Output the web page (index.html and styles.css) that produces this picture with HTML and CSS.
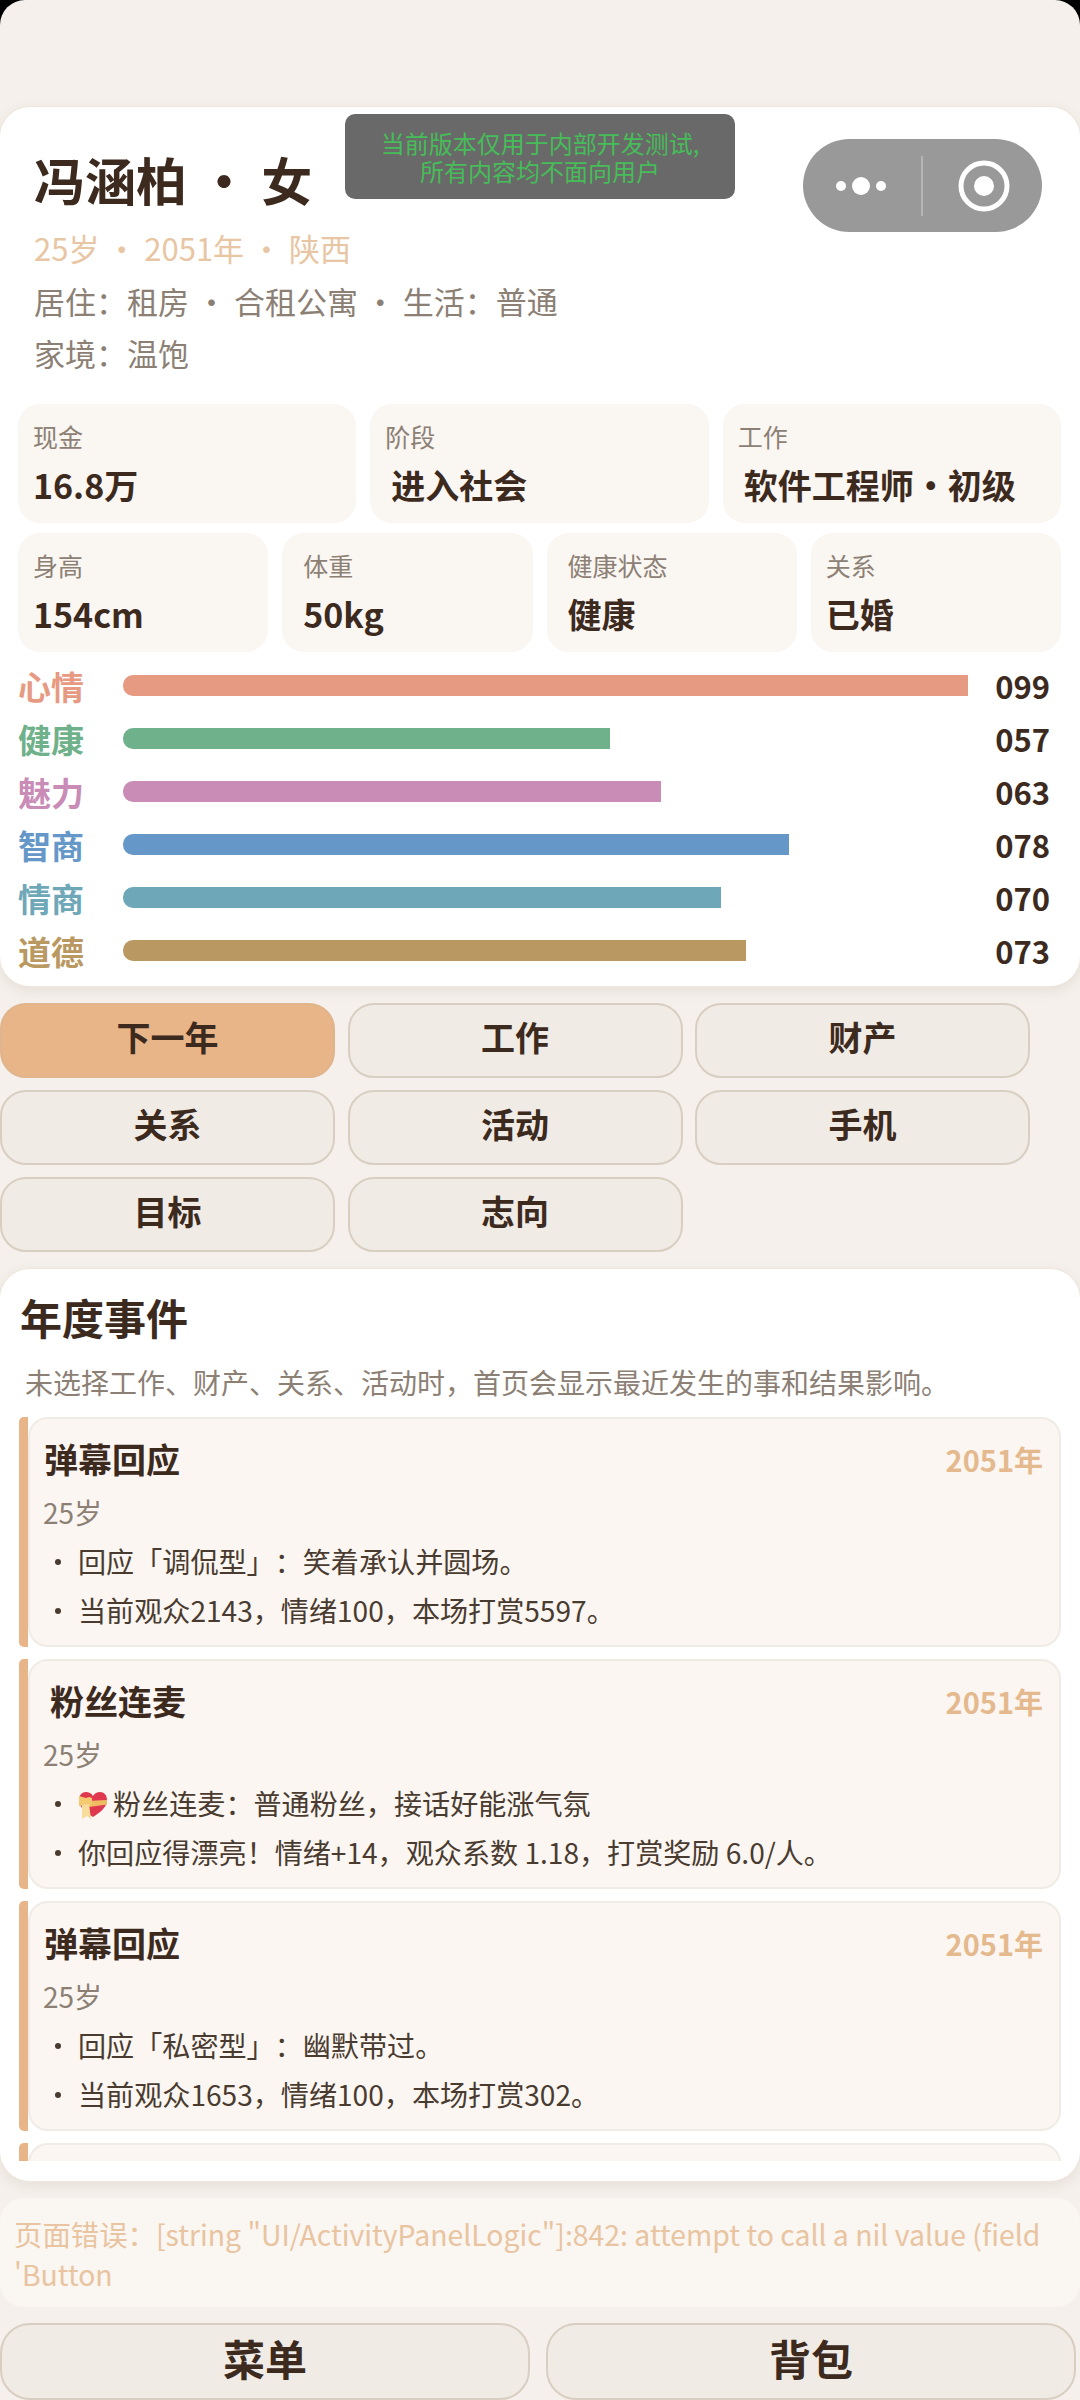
FILE: index.html
```html
<!DOCTYPE html>
<html lang="zh-CN">
<head>
    <meta charset="UTF-8">
    <meta name="viewport" content="width=device-width, initial-scale=1.0">
    <title>人生模拟</title>
    <link rel="stylesheet" href="styles.css">
</head>
<body>
    <div class="toast">当前版本仅用于内部开发测试,<br>所有内容均不面向用户</div>
    <div class="capsule">
        <svg class="capsule-icon" width="239" height="93" viewBox="0 0 239 93">
            <circle cx="38" cy="47" r="5" fill="#fff"/>
            <circle cx="58" cy="47" r="9" fill="#fff"/>
            <circle cx="78" cy="47" r="5" fill="#fff"/>
            <rect x="118" y="17" width="2" height="60" fill="#b5b5b5"/>
            <circle cx="181" cy="47" r="23" fill="none" stroke="#fff" stroke-width="5"/>
            <circle cx="181" cy="47" r="10" fill="#fff"/>
        </svg>
    </div>

    <section class="hero">
        <h1 class="name">冯涵柏 · 女</h1>
        <p class="meta">25岁 · 2051年 · 陕西</p>
        <p class="info info-first">居住：租房 · 合租公寓 · 生活：普通</p>
        <p class="info">家境：温饱</p>

        <div class="tiles tiles-3">
            <div class="tile"><span class="tile-label">现金</span><span class="tile-value">16.8万</span></div>
            <div class="tile"><span class="tile-label">阶段</span><span class="tile-value nudge">进入社会</span></div>
            <div class="tile"><span class="tile-label">工作</span><span class="tile-value nudge">软件工程师·初级</span></div>
        </div>
        <div class="tiles tiles-4">
            <div class="tile"><span class="tile-label">身高</span><span class="tile-value">154cm</span></div>
            <div class="tile tile-inset"><span class="tile-label">体重</span><span class="tile-value">50kg</span></div>
            <div class="tile tile-inset"><span class="tile-label">健康状态</span><span class="tile-value">健康</span></div>
            <div class="tile"><span class="tile-label">关系</span><span class="tile-value">已婚</span></div>
        </div>

        <div class="stats">
            <div class="stat c-mood"><span class="stat-name">心情</span><div class="track"><div class="bar" style="width: 99%"></div></div><span class="stat-num">099</span></div>
            <div class="stat c-health"><span class="stat-name">健康</span><div class="track"><div class="bar" style="width: 57%"></div></div><span class="stat-num">057</span></div>
            <div class="stat c-charm"><span class="stat-name">魅力</span><div class="track"><div class="bar" style="width: 63%"></div></div><span class="stat-num">063</span></div>
            <div class="stat c-iq"><span class="stat-name">智商</span><div class="track"><div class="bar" style="width: 78%"></div></div><span class="stat-num">078</span></div>
            <div class="stat c-eq"><span class="stat-name">情商</span><div class="track"><div class="bar" style="width: 70%"></div></div><span class="stat-num">070</span></div>
            <div class="stat c-moral"><span class="stat-name">道德</span><div class="track"><div class="bar" style="width: 73%"></div></div><span class="stat-num">073</span></div>
        </div>
    </section>

    <nav class="actions">
        <button class="btn btn-primary">下一年</button>
        <button class="btn">工作</button>
        <button class="btn">财产</button>
        <button class="btn">关系</button>
        <button class="btn">活动</button>
        <button class="btn">手机</button>
        <button class="btn">目标</button>
        <button class="btn">志向</button>
    </nav>

    <section class="events">
        <h2 class="events-title">年度事件</h2>
        <p class="events-intro">未选择工作、财产、关系、活动时，首页会显示最近发生的事和结果影响。</p>
        <div class="event-list">
            <article class="event">
                <div class="event-stripe"></div>
                <div class="event-body">
                    <div class="event-head"><h3 class="event-title">弹幕回应</h3><span class="event-year">2051年</span></div>
                    <div class="event-age">25岁</div>
                    <ul class="event-lines">
                        <li>回应「调侃型」：笑着承认并圆场。</li>
                        <li>当前观众2143，情绪100，本场打赏5597。</li>
                    </ul>
                </div>
            </article>
            <article class="event">
                <div class="event-stripe"></div>
                <div class="event-body">
                    <div class="event-head"><h3 class="event-title nudge">粉丝连麦</h3><span class="event-year">2051年</span></div>
                    <div class="event-age">25岁</div>
                    <ul class="event-lines">
                        <li><svg class="emoji" width="29" height="27" viewBox="0 0 29 27">
                            <path d="M15 25C9 21 1 16 1 8c0-5 3-8 7-8 3 0 5 1 7 4 2-3 4-4 7-4 4 0 7 3 7 8 0 8-8 13-14 17z" fill="#e0384f"/>
                            <path d="M9 9l20-1v4.500L11 15z" fill="#f0bc62"/>
                            <path d="M1 4l7 2 3-1 3 1 0 6-3 2-3-1-7 1z" fill="#f5c96f"/>
                            <path d="M4 13l7-1 2 15-4-3-5 3z" fill="#f8dc9c"/>
                        </svg>粉丝连麦：普通粉丝，接话好能涨气氛</li>
                        <li>你回应得漂亮！情绪+14，观众系数 1.18，打赏奖励 6.0/人。</li>
                    </ul>
                </div>
            </article>
            <article class="event">
                <div class="event-stripe"></div>
                <div class="event-body">
                    <div class="event-head"><h3 class="event-title">弹幕回应</h3><span class="event-year">2051年</span></div>
                    <div class="event-age">25岁</div>
                    <ul class="event-lines">
                        <li>回应「私密型」：幽默带过。</li>
                        <li>当前观众1653，情绪100，本场打赏302。</li>
                    </ul>
                </div>
            </article>
            <article class="event">
                <div class="event-stripe"></div>
                <div class="event-body"></div>
            </article>
        </div>
    </section>

    <div class="error">页面错误：[string "UI/ActivityPanelLogic"]:842: attempt to call a nil value (field<br>'Button</div>

    <footer class="bottom">
        <button class="btn btn-big">菜单</button>
        <button class="btn btn-big">背包</button>
    </footer>
</body>
</html>
```

FILE: styles.css
```css
* {
    box-sizing: border-box;
}

html {
    background: #000;
}

body {
    position: relative;
    width: 1080px;
    height: 2400px;
    margin: 0;
    padding-top: 107px;
    overflow: hidden;
    background: #f5f0eb;
    border-radius: 25px 25px 0 0;
    color: #3d2a1e;
    font-family: "Noto Sans CJK SC", "Noto Sans", sans-serif;
    text-spacing-trim: space-all;
}

h1, h2, h3, p, ul {
    margin: 0;
    padding: 0;
}

.toast {
    position: absolute;
    top: 114px;
    left: 345px;
    width: 390px;
    height: 85px;
    padding-top: 15px;
    background: #696969;
    border-radius: 10px;
    color: #46bd58;
    font-size: 24px;
    line-height: 28px;
    text-align: center;
}

.capsule {
    position: absolute;
    top: 139px;
    left: 803px;
    width: 239px;
    height: 93px;
    background: #999;
    border-radius: 47px;
}

.capsule-icon {
    display: block;
}

.hero {
    height: 879px;
    padding: 42px 0 0;
    background: #fff;
    border-radius: 30px;
    box-shadow: 0 0 0 1px #efe6de, 0 4px 14px rgba(90, 70, 50, 0.1);
}

.name {
    width: fit-content;
    padding-left: 34px;
    font-size: 51px;
    line-height: 60px;
    font-weight: 700;
}

.meta {
    margin-top: 19px;
    padding-left: 34px;
    color: #e8c6a3;
    font-size: 31px;
    line-height: 40px;
}

.info {
    margin-top: 12px;
    padding-left: 34px;
    color: #8c8075;
    font-size: 31px;
    line-height: 40px;
}

.info-first {
    margin-top: 13px;
}

.tiles {
    display: grid;
    gap: 14px;
    padding: 0 19px 0 18px;
}

.tiles-3 {
    grid-template-columns: repeat(3, 1fr);
    margin-top: 31px;
}

.tiles-4 {
    grid-template-columns: repeat(4, 1fr);
    margin-top: 10px;
}

.tile {
    display: flex;
    flex-direction: column;
    height: 119px;
    padding: 16px 15px 0;
    background: #faf6f2;
    border-radius: 22px;
}

.tile-inset {
    padding-left: 21px;
}

.tile-label {
    color: #8c8075;
    font-size: 25px;
    line-height: 32px;
}

.tile-value {
    margin-top: 10px;
    font-size: 34px;
    line-height: 46px;
    font-weight: 700;
}

.nudge {
    padding-left: 6px;
}

.stats {
    display: flex;
    flex-direction: column;
    gap: 13px;
    margin-top: 13px;
    padding: 0 30px 0 18px;
}

.stat {
    display: flex;
    align-items: center;
    height: 40px;
}

.stat-name {
    width: 105px;
    padding-top: 2px;
    font-size: 33px;
    line-height: 40px;
    font-weight: 700;
}

.track {
    flex: 1;
}

.bar {
    height: 21px;
    border-radius: 10px 0 0 10px;
}

.stat-num {
    width: 73px;
    padding-top: 2px;
    font-size: 31px;
    line-height: 40px;
    font-weight: 700;
    text-align: right;
}

.c-mood .stat-name { color: #e79a82; }
.c-mood .bar { background: #e79a82; }
.c-health .stat-name { color: #6fb18a; }
.c-health .bar { background: #6fb18a; }
.c-charm .stat-name { color: #c88cb6; }
.c-charm .bar { background: #c88cb6; }
.c-iq .stat-name { color: #6598c9; }
.c-iq .bar { background: #6598c9; }
.c-eq .stat-name { color: #6ea8b8; }
.c-eq .bar { background: #6ea8b8; }
.c-moral .stat-name { color: #b99862; }
.c-moral .bar { background: #b99862; }

.actions {
    display: grid;
    grid-template-columns: repeat(3, 335px);
    gap: 12px 12.5px;
    margin-top: 17px;
}

.btn {
    height: 75px;
    padding: 0 0 8px;
    background: #f0ebe4;
    border: 2px solid #d9cec2;
    border-radius: 26px;
    color: #3d2a1e;
    font-family: inherit;
    font-size: 34px;
    font-weight: 700;
}

.btn-primary {
    background: #e7b587;
    border-color: #e0b48c;
}

.events {
    display: flex;
    flex-direction: column;
    height: 912px;
    margin-top: 17px;
    padding-bottom: 20px;
    background: #fff;
    border-radius: 30px;
    box-shadow: 0 0 0 1px #efe6de, 0 4px 14px rgba(90, 70, 50, 0.1);
}

.events-title {
    padding: 20px 0 0 20px;
    font-size: 42px;
    line-height: 56px;
    font-weight: 700;
}

.events-intro {
    margin-top: 17px;
    padding-left: 25px;
    color: #8c8075;
    font-size: 28px;
    line-height: 40px;
}

.event-list {
    flex: 1;
    margin-top: 15px;
    padding: 0 19px;
    overflow: hidden;
}

.event {
    display: flex;
    height: 230px;
    margin-bottom: 12px;
}

.event-stripe {
    flex: none;
    width: 9px;
    background: #e7b587;
    border-radius: 5px 0 0 5px;
}

.event-body {
    flex: 1;
    padding: 0 16px 0 14px;
    background: #fbf6f1;
    border: 2px solid #f0ebe4;
    border-radius: 20px;
}

.event-head {
    display: flex;
    justify-content: space-between;
    align-items: center;
    padding-top: 16px;
}

.event-title {
    font-size: 34px;
    line-height: 48px;
    font-weight: 700;
}

.event-year {
    color: #e5b98e;
    font-size: 29px;
    font-weight: 700;
}

.event-age {
    margin-top: 9px;
    margin-left: -1px;
    color: #8c8075;
    font-size: 28px;
    line-height: 40px;
}

.event-lines {
    margin-top: 9px;
    list-style: none;
    font-size: 28.1px;
    line-height: 40px;
    color: #4a3b30;
}

.event-lines li {
    position: relative;
    margin-bottom: 9px;
    padding-left: 34px;
}

.event-lines li::before {
    content: "";
    position: absolute;
    top: 18px;
    left: 11px;
    width: 6px;
    height: 6px;
    border-radius: 3px;
    background: #4a3b30;
}

.emoji {
    margin-right: 6px;
    vertical-align: -4px;
}

.error {
    height: 109px;
    margin-top: 17px;
    padding: 16px 14px 0;
    background: #faf6f2;
    border-radius: 24px;
    color: #e8c4a0;
    font-size: 28.4px;
    line-height: 40px;
    white-space: nowrap;
}

.bottom {
    display: flex;
    gap: 16px;
    padding-right: 4px;
    margin-top: 16px;
}

.btn-big {
    flex: 1;
    height: 77px;
    border-radius: 30px;
    font-size: 42px;
}
```
